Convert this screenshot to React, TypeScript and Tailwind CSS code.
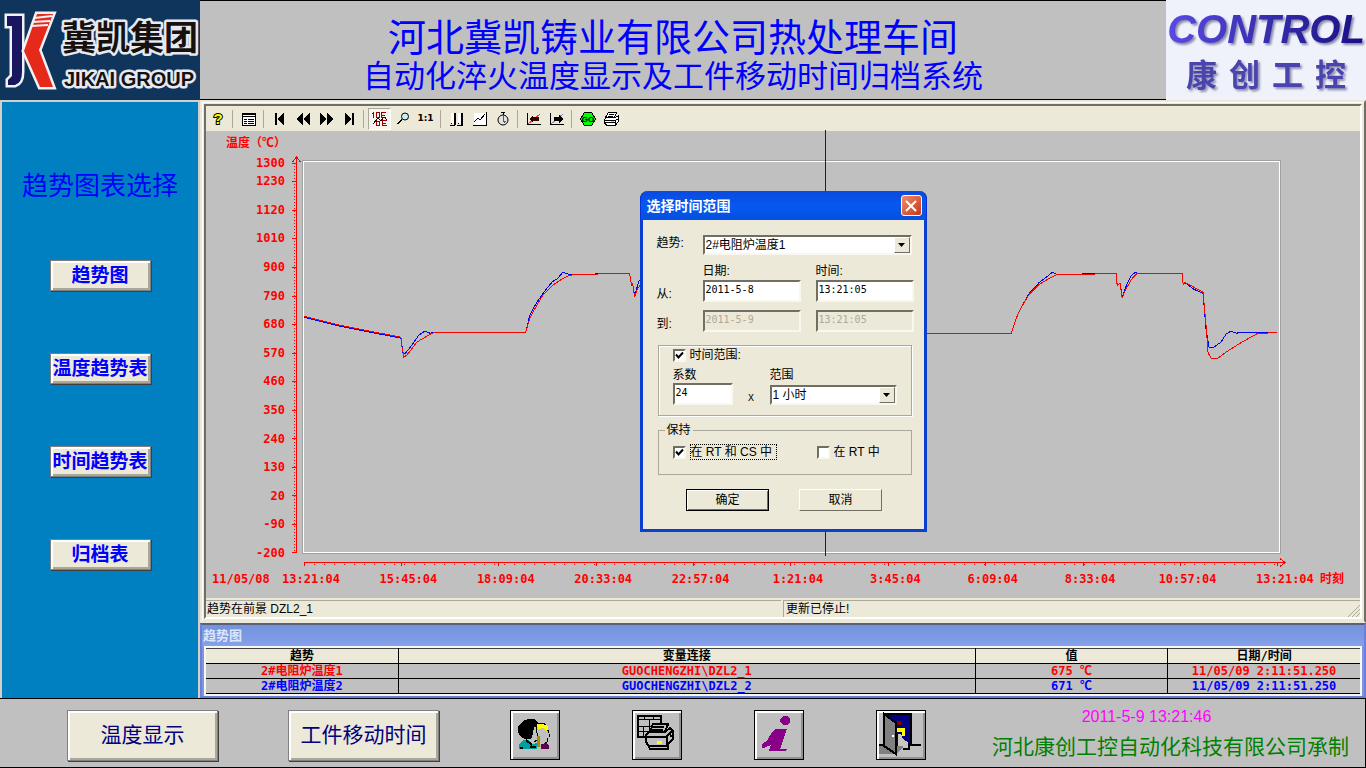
import { useState } from 'react'
import type { ReactNode } from 'react'

interface TrendRow {
  name: string
  variable: string
  value: string
  time: string
  color: string
}

interface ToolItem {
  label: string
  icon?: ReactNode
  active?: boolean
}

const NAV_ITEMS = ['趋势图', '温度趋势表', '时间趋势表', '归档表']

const Y_LABELS = ['1300', '1230', '1120', '1010', '900', '790', '680', '570', '460', '350', '240', '130', '20', '-90', '-200']

const X_LABELS = [
  '13:21:04',
  '15:45:04',
  '18:09:04',
  '20:33:04',
  '22:57:04',
  '1:21:04',
  '3:45:04',
  '6:09:04',
  '8:33:04',
  '10:57:04',
  '13:21:04',
]

const ROWS: TrendRow[] = [
  { name: '2#电阻炉温度1', variable: 'GUOCHENGZHI\\DZL2_1', value: '675 ℃', time: '11/05/09 2:11:51.250', color: 'text-[#f00]' },
  { name: '2#电阻炉温度2', variable: 'GUOCHENGZHI\\DZL2_2', value: '671 ℃', time: '11/05/09 2:11:51.250', color: 'text-[#00f]' },
]

const RED_CURVE =
  '304,316 320,320 340,325 360,329 380,333 401,337 402,346 404,357 407,355 411,350 417,342 422,339 427,336 432,333 440,332 526,332 530,318 537,305 543,295 553,285 560,280 567,276 575,274 630,273 632,286 633,283 635,297 637,290 641,284 650,273 700,273 705,300 720,350 760,333 927,333 960,333 1012,333 1017,318 1022,307 1030,294 1040,284 1050,278 1058,274 1080,274 1117,273 1118,285 1121,283 1123,298 1126,290 1133,278 1138,273 1183,273 1184,284 1186,282 1195,287 1204,292 1207,325 1209,353 1212,358 1218,359 1227,352 1243,342 1259,333 1268,333 1278,332'

const BLUE_CURVE =
  '304,317 320,321 340,326 360,330 380,334 401,338 402,345 403,353 405,354 412,345 419,335 425,331 430,333 440,332 526,332 530,315 537,302 547,288 553,281 558,278 563,272 570,274 630,273 632,286 633,283 635,296 639,281 641,279 650,273 700,273 705,300 720,345 750,333 927,333 960,333 1012,333 1017,318 1022,307 1030,293 1040,282 1048,276 1053,272 1058,274 1117,273 1118,285 1121,283 1123,297 1126,288 1132,275 1136,272 1140,273 1183,273 1184,284 1187,283 1195,289 1204,293 1207,330 1210,347 1215,347 1222,342 1227,334 1232,331 1237,333 1250,332 1278,332'

const SUNKEN = 'border-2 border-t-[#716f64] border-l-[#716f64] border-r-[#f8f7f0] border-b-[#f8f7f0]'
const RAISED = 'border border-[#808080] bg-[#ece9d8] shadow-[inset_2px_2px_0_#fff,inset_-2px_-2px_0_#aca899,1px_1px_0_#404040]'

function Icon({ children }: { children: ReactNode }) {
  return (
    <svg className="size-4" viewBox="0 0 16 16" fill="none" stroke="#000" shapeRendering="crispEdges" aria-hidden="true">
      {children}
    </svg>
  )
}

const TOOL_GROUPS: ToolItem[][] = [
  [
    {
      label: '帮助',
      icon: (
        <Icon>
          <text
            x="8"
            y="13"
            fontSize="15"
            fontWeight="700"
            textAnchor="middle"
            fill="#ff0"
            strokeWidth="2"
            paintOrder="stroke"
            shapeRendering="auto"
            fontFamily="Liberation Sans, sans-serif"
          >
            ?
          </text>
        </Icon>
      ),
    },
  ],
  [
    {
      label: '组态',
      icon: (
        <Icon>
          <rect x="1.5" y="2.5" width="13" height="12" fill="#fff" />
          <path d="M1 3.5h14M1 5.5h14M3 8.5h3M7 8.5h6M3 10.5h3M7 10.5h6M3 12.5h3M7 12.5h6" />
        </Icon>
      ),
    },
  ],
  [
    {
      label: '首条',
      icon: (
        <Icon>
          <path d="M3 2h2v12H3zM12 2v12L5 8z" fill="#000" stroke="none" />
        </Icon>
      ),
    },
    {
      label: '后退',
      icon: (
        <Icon>
          <path d="M8 2v12L1 8zM15 2v12L8 8z" fill="#000" stroke="none" />
        </Icon>
      ),
    },
    {
      label: '前进',
      icon: (
        <Icon>
          <path d="M2 2v12l7-6zM9 2v12l7-6z" fill="#000" stroke="none" />
        </Icon>
      ),
    },
    {
      label: '末条',
      icon: (
        <Icon>
          <path d="M4 2v12l7-6zM11 2h2v12h-2z" fill="#000" stroke="none" />
        </Icon>
      ),
    },
  ],
  [
    {
      label: '时间范围',
      active: true,
      icon: (
        <Icon>
          <path d="M1.500 1v6M0 2.500h1M4.500 1.500h3v5h-3zM9.500 1v6M9 1.500h5M9 4.500h4M9 6.500h5M10.500 9v6M10 9.500h5M10 12.500h4M10 14.500h5M4.500 10.500h3v4h-3z" stroke="#900" />
          <path d="M1 13l5-6 3 3 3-4 3 3" stroke="#300" />
        </Icon>
      ),
    },
    {
      label: '缩放',
      icon: (
        <Icon>
          <circle cx="10" cy="5.500" r="3.500" fill="#c8f0f0" strokeWidth="1" shapeRendering="auto" />
          <path d="M7 8.500L2.500 13" strokeWidth="2" />
        </Icon>
      ),
    },
    { label: '1:1' },
  ],
  [
    {
      label: '趋势选择',
      icon: (
        <Icon>
          <path d="M2 2h4v10H2zM9 2h4v10H9z" fill="#fff" stroke="none" />
          <path d="M6 2v12M13 2v12" strokeWidth="2" />
          <path d="M1 14.500h5M8 14.500h6M2.500 12v1M9.500 12v1" />
        </Icon>
      ),
    },
    {
      label: '曲线',
      icon: (
        <Icon>
          <path d="M2 2h12v12H2z" fill="#fff" stroke="none" />
          <path d="M1 14.500h13.500V1M2 11l4-4 2 2 5-6" />
        </Icon>
      ),
    },
    {
      label: '时钟',
      icon: (
        <Icon>
          <circle cx="8" cy="9" r="5" fill="#e4e2de" shapeRendering="auto" />
          <path d="M6 1.500h4M8 2v2" />
          <path d="M8 5v5M8 10h3M8 10l2 2" stroke="#5050a0" />
        </Icon>
      ),
    },
  ],
  [
    {
      label: '左移轴',
      icon: (
        <Icon>
          <path d="M1.500 2v11M1 13.500h14" />
          <path d="M2 13L14 3" stroke="#f33" />
          <path d="M3 8l4-4v2h6v4H7v2z" fill="#300" stroke="none" />
        </Icon>
      ),
    },
    {
      label: '右移轴',
      icon: (
        <Icon>
          <path d="M1.500 2v11M1 13.500h14" />
          <path d="M2 13L14 3" stroke="#88c" />
          <path d="M14 8l-4-4v2H5v4h5v2z" fill="#000" stroke="none" />
        </Icon>
      ),
    },
  ],
  [
    {
      label: '启动',
      icon: (
        <Icon>
          <path d="M4.500 1.500h7l4 6.500-4 6.500h-7L.5 8z" fill="#0f0" />
          <text
            x="8"
            y="11"
            fontSize="8"
            fontWeight="700"
            textAnchor="middle"
            fill="#000"
            stroke="none"
            fontFamily="Liberation Sans, sans-serif"
          >
            GO
          </text>
        </Icon>
      ),
    },
    {
      label: '打印',
      icon: (
        <Icon>
          <path d="M5.500 1.500h8l-2 5h-9z" fill="#fff" />
          <path d="M6 3.500h5M5 5.500h5" />
          <path d="M1.500 8.500l2-2h9l3-2v6l-3 3.500h-9l-2-2z" fill="#fff" />
          <path d="M1.500 9.500h11l3-2M2 11.500h10M12.500 9v5" />
          <path d="M8 10.500h3" stroke="#dd0" />
        </Icon>
      ),
    },
  ],
]

function JikaiLogo() {
  return (
    <div className="flex w-[200px] shrink-0 items-center bg-[#10355d]" aria-label="JIKAI GROUP">
      <svg className="h-[99px] w-[60px] shrink-0" viewBox="0 0 60 99" aria-hidden="true">
        <path d="M7 15h15v56q0 11-7 13H8v-5l4-4V25H7z" fill="#17165f" stroke="#f0f2f6" strokeWidth="5" paintOrder="stroke" />
        <path d="M37 13h16L39 49l14 37H40L24 50z" fill="#e52a1c" stroke="#f0f2f6" strokeWidth="5" paintOrder="stroke" />
        <path d="M34 17l18-2M32 21l18-1M31 25l17-1" stroke="#f0f2f6" strokeWidth="2" />
      </svg>
      <svg className="h-[99px] min-w-0 flex-1" viewBox="0 0 140 99" role="img">
        <g fontWeight="700" fill="#16110f" stroke="#e6eaf0" strokeWidth="5" strokeLinejoin="round" paintOrder="stroke">
          <text x="70" y="49" fontSize="34" textAnchor="middle" fontFamily="Noto Sans CJK SC, sans-serif">
            冀凯集团
          </text>
          <text x="69" y="85" fontSize="20" textAnchor="middle" fontFamily="Liberation Sans, sans-serif">
            JIKAI GROUP
          </text>
        </g>
      </svg>
    </div>
  )
}

function ControlLogo() {
  return (
    <div className="flex w-[200px] shrink-0 flex-col items-center justify-center bg-[#f0f2fb] pt-1">
      <span className="bg-linear-to-r from-[#5b4be6] to-[#180c80] bg-clip-text px-1 font-['Liberation_Sans',sans-serif] text-[40px] leading-[48px] font-bold text-transparent italic drop-shadow-[2px_2px_1px_#8888a8]">
        CONTROL
      </span>
      <span className="flex gap-3 text-[31px] leading-[46px] font-bold text-[#4a44ae] drop-shadow-[2px_2px_1px_#9090b0]">
        {['康', '创', '工', '控'].map((char) => (
          <span key={char}>{char}</span>
        ))}
      </span>
    </div>
  )
}

function Toolbar() {
  return (
    <div className="flex h-[25px] shrink-0 items-center bg-[#ece9d8]">
      {TOOL_GROUPS.map((group, index) => (
        <div key={group[0].label} className="flex items-center">
          {index > 0 && <span className="mr-1 ml-[3px] h-[18px] w-px bg-[#aca899]" />}
          {group.map((item) => (
            <button
              key={item.label}
              type="button"
              aria-label={item.label}
              className={
                item.active
                  ? 'flex h-[22px] w-[23px] items-center justify-center border border-[#aca899] border-r-white border-b-white bg-[#f8f4ee]'
                  : 'flex h-[22px] w-[23px] items-center justify-center'
              }
            >
              {item.icon ?? <span className="font-['DejaVu_Sans',sans-serif] text-[9px] font-bold">{item.label}</span>}
            </button>
          ))}
        </div>
      ))}
    </div>
  )
}

function TrendChart() {
  return (
    <div className="flex min-h-0 flex-1 flex-col bg-[#c0c0c0] font-['DejaVu_Sans_Mono','Noto_Sans_CJK_SC',monospace] text-xs font-bold text-[#f00]">
      <p className="h-[30px] pt-1 pl-5">温度（℃）</p>
      <div className="flex min-h-0 flex-1">
        <div className="flex w-[79px] shrink-0 flex-col pt-[2px] text-right">
          {Y_LABELS.map((label, index) => (
            <div
              key={label}
              className={
                index === 0 ? 'h-0 grow-7 leading-0' : index === Y_LABELS.length - 1 ? 'h-0 leading-0' : 'h-0 grow-11 leading-0'
              }
            >
              {label}
            </div>
          ))}
        </div>
        <svg className="h-full w-[18px] shrink-0 overflow-visible" viewBox="0 0 18 392" preserveAspectRatio="none" shapeRendering="crispEdges" stroke="#f00" fill="none">
          <path d="M11.500-3V392" />
          <path d="M9.500 2V392" strokeDasharray="1 2" />
          <path d="M7.500 1l4-5 4 5" />
          <path d="M7 2.500h4M7 20.500h4M7 49.500h4M7 77.500h4M7 106.500h4M7 135.500h4M7 163.500h4M7 192.500h4M7 220.500h4M7 249.500h4M7 277.500h4M7 306.500h4M7 334.500h4M7 363.500h4M7 391.500h4" />
        </svg>
        <div className="relative mr-20 min-w-0 flex-1 border border-white outline outline-[#a0a0a0]">
          <svg className="block size-full" viewBox="304 161 976 392" preserveAspectRatio="none" shapeRendering="crispEdges" fill="none" role="img" aria-label="温度">
            <polyline points={BLUE_CURVE} stroke="#00f" vectorEffect="non-scaling-stroke" />
            <polyline points={RED_CURVE} stroke="#f00" vectorEffect="non-scaling-stroke" />
          </svg>
          <span className="absolute -top-8 -bottom-1 left-[53.4%] w-px bg-[#202020]" />
        </div>
      </div>
      <div className="flex h-[45px] flex-col">
        <svg className="mr-[74px] ml-[98px] h-4 overflow-visible" viewBox="0 0 982 16" preserveAspectRatio="none" shapeRendering="crispEdges" stroke="#f00" fill="none">
          <path d="M0 9.500h980M976 5.500l5 4-5 4" />
          <path d="M0 11h976" strokeWidth="1" strokeDasharray="1 9" />
          <path d="M.5 9v4M97.500 9v4M194.500 9v4M292.500 9v4M389.500 9v4M486.500 9v4M584.500 9v4M681.500 9v4M779.500 9v4M876.500 9v4M973.500 9v4" />
        </svg>
        <div className="flex pt-[2px]">
          <span className="w-[105px] shrink-0 pl-[6px]">11/05/08</span>
          <div className="flex min-w-0 flex-1 justify-between">
            {X_LABELS.map((label, index) => (
              <span key={index} className="flex w-0 justify-center whitespace-nowrap">
                {label}
              </span>
            ))}
          </div>
          <span className="w-[75px] shrink-0 pl-[35px]">时刻</span>
        </div>
      </div>
    </div>
  )
}

function Dropdown({ id, options }: { id: string; options: string[] }) {
  return (
    <div className="relative flex h-5 w-full border-2 border-[#f8f7f0] border-t-[#716f64] border-l-[#716f64] bg-white">
      <select id={id} className="w-full appearance-none bg-white pl-px text-xs leading-4 outline-none">
        {options.map((option) => (
          <option key={option}>{option}</option>
        ))}
      </select>
      <span className="pointer-events-none absolute inset-y-0 right-0 flex w-4 items-center justify-center border border-white border-r-[#716f64] border-b-[#716f64] bg-[#ece9d8]">
        <svg className="h-1 w-[7px]" viewBox="0 0 7 4" aria-hidden="true">
          <path d="M0 0h7L3.500 4z" />
        </svg>
      </span>
    </div>
  )
}

function CheckBox({ id, checked, onChange }: { id: string; checked: boolean; onChange: (checked: boolean) => void }) {
  return (
    <span className="relative flex size-[13px] shrink-0">
      <input
        id={id}
        type="checkbox"
        className={`size-[13px] appearance-none bg-white ${SUNKEN}`}
        checked={checked}
        onChange={(event) => onChange(event.target.checked)}
      />
      {checked && (
        <svg className="pointer-events-none absolute inset-0 size-[13px]" viewBox="0 0 13 13" fill="none" stroke="#000" strokeWidth="2" aria-hidden="true">
          <path d="M3 5.500l2.500 3 4.500-5" />
        </svg>
      )}
    </span>
  )
}

function TimeRangeDialog() {
  const [useRange, setUseRange] = useState(true)
  const [keepBoth, setKeepBoth] = useState(true)
  const [keepRt, setKeepRt] = useState(false)
  const field = `h-[22px] w-[98px] px-px pb-1 font-['DejaVu_Sans_Mono',monospace] text-[10px] leading-4 ${SUNKEN}`

  return (
    <div
      role="dialog"
      aria-label="选择时间范围"
      className="w-[287px] rounded-t-lg border-[3px] border-t-0 border-[#0a3fd0] bg-[#ece9d8] pb-[18px] text-xs leading-4 text-black"
    >
      <div className="-mx-[3px] flex h-[29px] items-center justify-between rounded-t-lg border-x border-[#0831d9] bg-linear-to-b from-[#0a4ade] via-[#0558f0] to-[#0450e0] pr-1 pl-[6px]">
        <h2 className="text-[14px] font-bold text-white">选择时间范围</h2>
        <button type="button" aria-label="关闭" className="flex size-[21px] items-center justify-center rounded-[3px] border border-white bg-linear-to-br from-[#ef8a6c] to-[#c8320c]">
          <svg className="size-3" viewBox="0 0 12 12" stroke="#fff" strokeWidth="2" aria-hidden="true">
            <path d="M1 1l10 10M11 1L1 11" />
          </svg>
        </button>
      </div>

      <form className="pt-[15px] pr-3 pl-[14px]" onSubmit={(event) => event.preventDefault()}>
        <div className="flex">
          <label htmlFor="trend" className="w-[46px] shrink-0">
            趋势:
          </label>
          <div className="min-w-0 flex-1">
            <Dropdown id="trend" options={['2#电阻炉温度1', '2#电阻炉温度2']} />
          </div>
        </div>

        <div className="mt-2 flex pl-[46px]">
          <span id="date-label" className="w-[113px]">
            日期:
          </span>
          <span id="time-label">时间:</span>
        </div>
        <div className="mt-px flex items-end">
          <span className="w-[46px] shrink-0">从:</span>
          <input aria-labelledby="date-label" className={`mr-[15px] bg-white ${field}`} defaultValue="2011-5-8" />
          <input aria-labelledby="time-label" className={`bg-white ${field}`} defaultValue="13:21:05" />
        </div>
        <div className="mt-2 flex items-end">
          <span className="w-[46px] shrink-0">到:</span>
          <input aria-labelledby="date-label" className={`mr-[15px] bg-[#ece9d8] text-[#aca899] ${field}`} defaultValue="2011-5-9" disabled={useRange} />
          <input aria-labelledby="time-label" className={`bg-[#ece9d8] text-[#aca899] ${field}`} defaultValue="13:21:05" disabled={useRange} />
        </div>

        <div className="mt-[13px] ml-px h-[71px] border border-[#aca899] pl-[14px] shadow-[1px_1px_0_#fff,inset_1px_1px_0_#fff]">
          <div className="flex items-center gap-1 pt-px">
            <CheckBox id="use-range" checked={useRange} onChange={setUseRange} />
            <label htmlFor="use-range">时间范围:</label>
          </div>
          <div className="mt-1 flex items-end">
            <div className="w-[60px]">
              <label htmlFor="factor" className="block">
                系数
              </label>
              <input id="factor" className={`block h-[22px] w-[60px] bg-white px-px pb-1 font-['DejaVu_Sans_Mono',monospace] text-[10px] leading-4 ${SUNKEN}`} defaultValue="24" />
            </div>
            <span className="w-[37px] text-center font-['Liberation_Mono',monospace] text-[10px] leading-3">X</span>
            <div className="w-[127px]">
              <label htmlFor="unit" className="mb-[2px] block">
                范围
              </label>
              <Dropdown id="unit" options={['1 小时']} />
            </div>
          </div>
        </div>

        <fieldset className="mt-[6px] ml-px h-[53px] border border-[#aca899] pl-[14px]">
          <legend className="-ml-2 px-[2px]">保持</legend>
          <div className="flex items-center pt-[6px]">
            <CheckBox id="keep-both" checked={keepBoth} onChange={setKeepBoth} />
            <label htmlFor="keep-both" className="ml-1 w-[87px] border border-dotted border-black leading-[14px] whitespace-nowrap">
              在 RT 和 CS 中
            </label>
            <span className="w-10" />
            <CheckBox id="keep-rt" checked={keepRt} onChange={setKeepRt} />
            <label htmlFor="keep-rt" className="ml-1 whitespace-nowrap">
              在 RT 中
            </label>
          </div>
        </fieldset>

        <div className="mt-[14px] flex justify-center gap-[30px]">
          <button type="submit" className="h-[22px] w-[83px] border border-black bg-[#ece9d8] shadow-[inset_1px_1px_0_#fff,inset_-1px_-1px_0_#716f64]">
            确定
          </button>
          <button type="button" className="h-[22px] w-[83px] border border-white border-r-[#716f64] border-b-[#716f64] bg-[#ece9d8]">
            取消
          </button>
        </div>
      </form>
    </div>
  )
}

function TrendTable() {
  const cell = 'border-r border-b border-black p-0 last:border-r-0'
  return (
    <section className="border-2 border-[#6d80d8] border-t-[#5a6078] bg-[#7b96e3]">
      <h2 className="h-[21px] bg-linear-to-b from-[#7692dc] via-[#7b98e4] to-[#86a2ec] pl-px text-[13px] leading-[21px] font-bold text-[#dbe6fb]">趋势图</h2>
      <div className="mx-[2px] border-2 border-[#f8f7f0] bg-[#c0c0c0]">
        <table className="w-full table-fixed border-collapse border-t border-[#404040] text-center font-['DejaVu_Sans_Mono','Noto_Sans_CJK_SC',monospace] text-xs leading-[14px] font-bold">
          <thead className="bg-[#ece9d8]">
            <tr>
              <th className={`w-1/6 ${cell}`}>趋势</th>
              <th className={`w-1/2 ${cell}`}>变量连接</th>
              <th className={`w-1/6 ${cell}`}>值</th>
              <th className={`w-1/6 ${cell}`}>日期/时间</th>
            </tr>
          </thead>
          <tbody>
            {ROWS.map((row) => (
              <tr key={row.name} className={row.color}>
                <td className={cell}>{row.name}</td>
                <td className={cell}>{row.variable}</td>
                <td className={cell}>{row.value}</td>
                <td className={cell}>{row.time}</td>
              </tr>
            ))}
          </tbody>
        </table>
      </div>
    </section>
  )
}

function IconButton({ label, children }: { label: string; children: ReactNode }) {
  return (
    <button type="button" aria-label={label} className="size-[50px] shrink-0 border border-black bg-[#c0c0c0] shadow-[inset_2px_2px_0_#fff,inset_-2px_-2px_0_#909090]">
      <svg className="size-12" viewBox="1 1 48 48" shapeRendering="crispEdges" aria-hidden="true">
        {children}
      </svg>
    </button>
  )
}

function Footer() {
  const wide = `h-[51px] w-[151px] shrink-0 text-[21px] text-[#000080] ${RAISED}`
  return (
    <footer className="flex h-[70px] shrink-0 items-center border-y border-r border-black bg-[#c0c0c0] pt-[6px] pr-4 pb-[2px] pl-[67px]">
      <div className="mr-[71px] flex gap-[70px]">
        <button type="button" className={wide}>
          温度显示
        </button>
        <button type="button" className={wide}>
          工件移动时间
        </button>
      </div>
      <div className="flex gap-[72px]">
        <IconButton label="用户">
          <path d="M13 11l5-2h6l4 3 1 5h-3l-3 3v5l-2 4h-6l-4-2-3-5v-6z" />
          <path d="M24 17h2l1 5 1 3-1 2v3l-4 2-1-4z" fill="#c0c0c0" />
          <path d="M26 17v4l2 4-1 2v3l-3 2M22 21v3" fill="none" stroke="#000" />
          <path d="M27 14l5-1 6 3v5h-2l-3-3-5 1z" fill="#ff0" />
          <path d="M27 13h6l3 2M37 20h2" fill="none" stroke="#000" />
          <path d="M30 19l5 1 2 2 2 3-2 2v5l-6 1z" fill="#c0c0c0" />
          <path d="M38 20v3M39 24v3M37 28v4l-3 2" fill="none" stroke="#000" />
          <path d="M9 34l5-4h5l3 4 5-1v6H9z" fill="#00a0a0" />
          <path d="M16 30l6 5M20 37h6M10 38h3" stroke="#000" strokeWidth="2" />
          <path d="M27 26h3v11h-3z" fill="#a09000" />
          <path d="M31 34l5-1 3 3v3h-8z" fill="#600050" />
        </IconButton>
        <IconButton label="打印">
          <path d="M5.500 5.500h23v21h-23z" fill="#c0c0c0" stroke="#000" strokeWidth="2" />
          <path d="M5 9h24M5 16h24M5 21h12M11 16v10M17 9v12M12 5v4M21 5v4" stroke="#000" fill="none" />
          <path d="M21 14h15l-3 8H18z" fill="#c0c0c0" stroke="#000" strokeWidth="2" />
          <path d="M21 17h11M20 20h11" stroke="#000" strokeWidth="2" />
          <path d="M14 25l3-3h16l5-4 3 3v8l-5 5v5H18l-2-4-2-3z" fill="#c0c0c0" stroke="#000" strokeWidth="2" />
          <path d="M14 27h20l6-6M16 36h20M35 27v8M37 23l3 4" stroke="#000" strokeWidth="2" fill="none" />
          <path d="M25 31h5v3h-5z" fill="#ff0" />
        </IconButton>
        <IconButton label="信息">
          <path d="M29 6h4l3 3v3l-3 3h-4l-3-3V9z" fill="#808" />
          <path d="M22 19h11l-7 20h7l-2 2H15l2-6-7 3H8v-4l5-3 5-9z" fill="#808" />
        </IconButton>
        <IconButton label="退出">
          <path d="M8 4h27v31H20z" fill="#000080" stroke="#000" strokeWidth="2" />
          <path d="M3 36h5l12 8H3zM20 36h8l-8 8z" fill="#808080" />
          <path d="M8 4l12 9v31L8 36z" fill="#808080" stroke="#000" strokeWidth="2" />
          <path d="M3 35h5M34 35h11" stroke="#000" strokeWidth="2" />
          <circle cx="17" cy="26" r="1" fill="#fff" />
          <path d="M21 11h4v4h-4z" fill="#800000" />
          <path d="M21 18h8v8h-3v-4h-5z" fill="#ff0" />
          <path d="M22 24h3l2 5 5 3v7h-5v-3h-5z" fill="#c8c8c0" />
          <path d="M27 39h6v-5" fill="none" stroke="#000" strokeWidth="2" />
        </IconButton>
      </div>
      <div className="ml-auto flex flex-col items-center whitespace-nowrap">
        <time className="pr-12 font-['Liberation_Sans',sans-serif] text-base leading-6 text-[#f0f]">2011-5-9 13:21:46</time>
        <span className="text-[21px] leading-9 text-[#008000]">河北康创工控自动化科技有限公司承制</span>
      </div>
    </footer>
  )
}

export default function App() {
  return (
    <div className="flex h-screen min-h-[640px] w-full flex-col bg-[#c0c0c0] font-['Liberation_Sans','Noto_Sans_CJK_SC',sans-serif] text-black">
      <header className="flex h-[100px] shrink-0 items-stretch">
        <JikaiLogo />
        <div className="flex min-w-0 flex-1 flex-col items-center justify-center border-y border-black pt-3 pr-[20px] text-center whitespace-nowrap text-[#00f]">
          <h1 className="text-[38px] leading-[42px]">河北冀凯铸业有限公司热处理车间</h1>
          <p className="text-[31px] leading-9">自动化淬火温度显示及工件移动时间归档系统</p>
        </div>
        <ControlLogo />
      </header>

      <div className="flex min-h-0 flex-1">
        <nav className="flex w-[200px] shrink-0 flex-col items-center border-2 border-b-0 border-[#d4d0c8] bg-[#0080c0] pt-[64px]">
          <h2 className="text-[26px] leading-10 text-[#00f]">趋势图表选择</h2>
          <div className="mt-[54px] flex flex-col gap-[62px]">
            {NAV_ITEMS.map((item) => (
              <button key={item} type="button" className={`h-[31px] w-[101px] text-[19px] leading-6 font-bold whitespace-nowrap text-[#00f] ${RAISED}`}>
                {item}
              </button>
            ))}
          </div>
        </nav>

        <main className="flex min-w-0 flex-1 flex-col">
          <section className="relative flex min-h-0 flex-1 flex-col border-2 border-[#ece9d8] border-r-[#716f64] bg-[#ece9d8] p-[2px] shadow-[inset_1px_1px_0_#fff]">
            <div className="flex min-h-0 flex-1 flex-col border-2 border-t-[#716f64] border-r-white border-b-white border-l-[#716f64]">
              <Toolbar />
              <TrendChart />
              <div className="flex h-[19px] shrink-0 gap-[2px] bg-[#ece9d8] pt-[2px] text-xs leading-4">
                <span className="flex-1 border-t border-[#aca899] pl-px">趋势在前景 DZL2_1</span>
                <span className="flex flex-1 justify-between border-t border-l border-[#aca899] pl-[2px]">
                  更新已停止!
                  <svg className="size-3 self-end" viewBox="0 0 12 12" stroke="#aca899" aria-hidden="true">
                    <path d="M0 12L12 0M4 12l8-8M8 12l4-4" />
                  </svg>
                </span>
              </div>
            </div>
            <div className="absolute inset-0 flex items-center justify-center">
              <TimeRangeDialog />
            </div>
          </section>
          <TrendTable />
        </main>
      </div>

      <Footer />
    </div>
  )
}
